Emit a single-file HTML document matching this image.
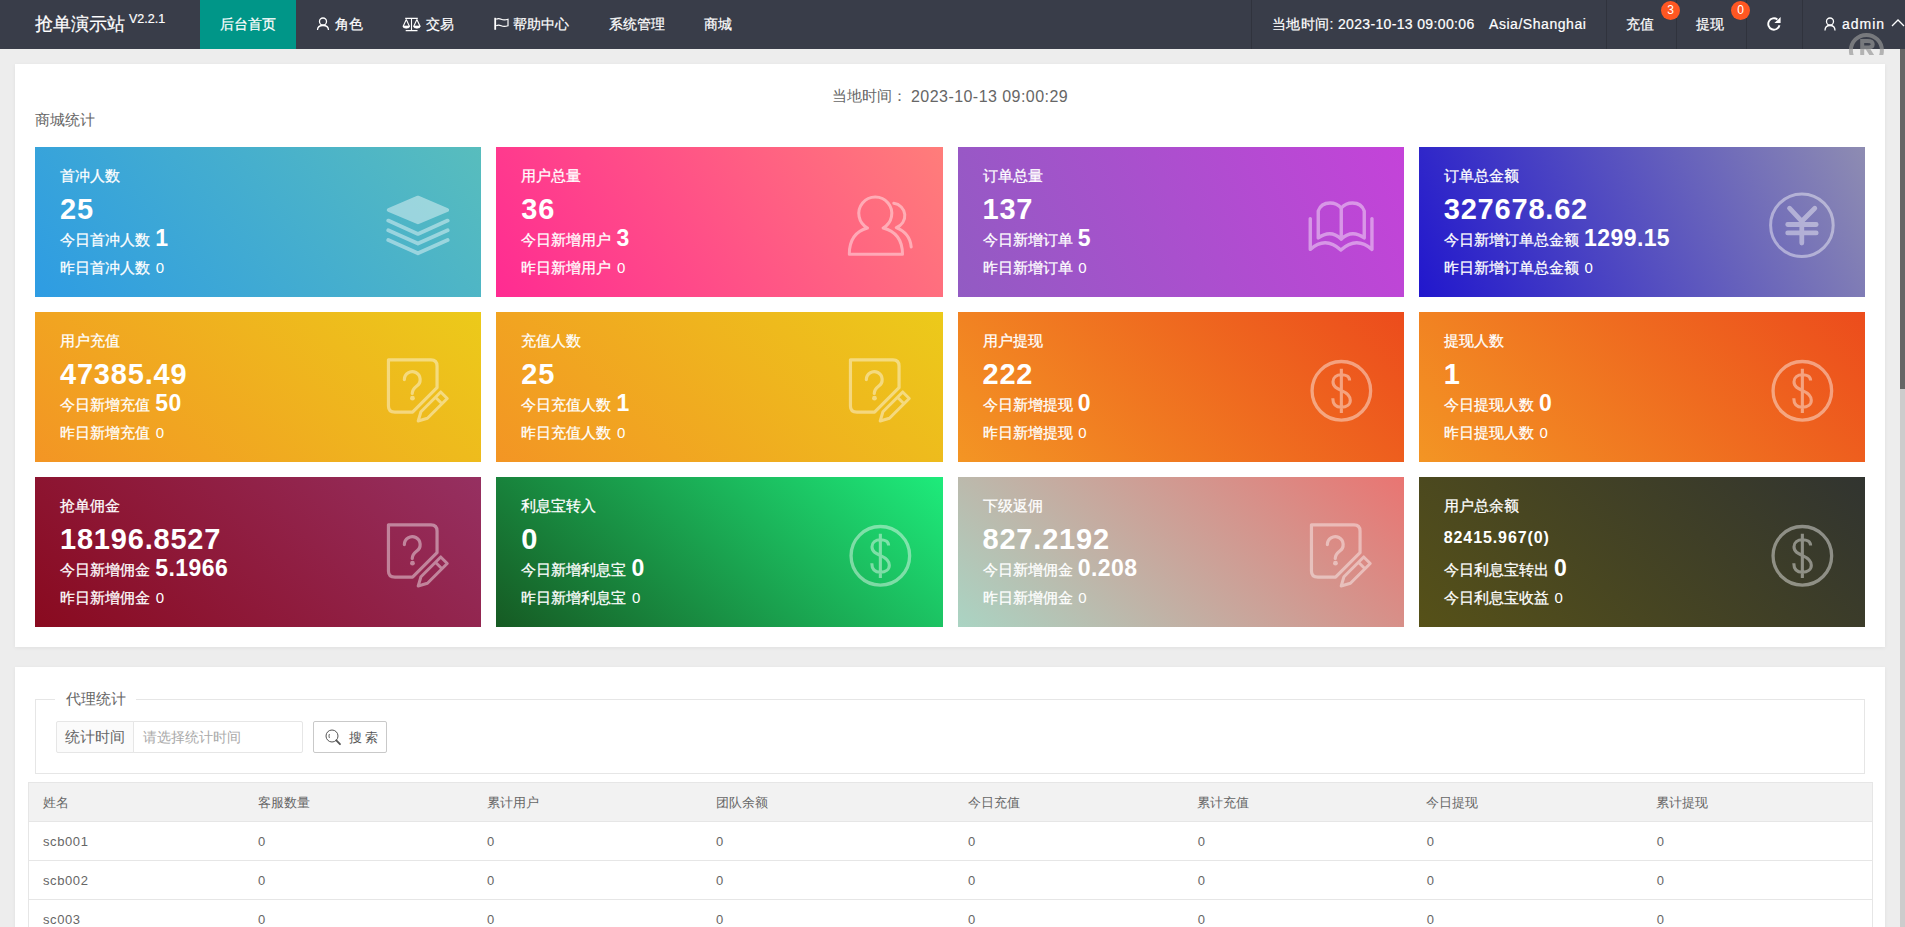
<!DOCTYPE html>
<html><head><meta charset="utf-8">
<style>
*{margin:0;padding:0;box-sizing:border-box}
html,body{width:1905px;height:927px;overflow:hidden;background:#ededed;font-family:"Liberation Sans",sans-serif;}
.hdr{position:absolute;left:0;top:0;width:1905px;height:49px;background:#393d49;color:#fff;font-size:14px;-webkit-text-stroke:0.2px #fff}
.hdr .a{position:absolute;white-space:nowrap;line-height:20px;top:14px}
.logo{position:absolute;left:35px;top:12px;font-size:18px;line-height:24px;color:#fff;white-space:nowrap}
.logo sup{font-size:12.5px;position:relative;top:-5px;vertical-align:top;margin-left:4px}
.active{position:absolute;left:200px;top:0;width:96px;height:49px;background:#009688}
.sep{position:absolute;top:0;width:1px;height:49px;background:#30333d}
.badge{-webkit-text-stroke:0;position:absolute;top:0.5px;width:19px;height:19px;border-radius:10px;background:#ff5722;color:#fff;font-size:12px;line-height:19px;text-align:center;z-index:2}
.panel{position:absolute;left:15px;width:1870px;background:#fff;box-shadow:0 1px 4px rgba(0,0,0,.06)}
.card{position:absolute;width:446.25px;height:150px;color:#fff;overflow:hidden;-webkit-text-stroke:0.25px #fff}
.card .t1{position:absolute;left:25px;top:19px;font-size:15px;line-height:20px;white-space:nowrap}
.card .num{position:absolute;left:25px;top:44.5px;font-size:29px;line-height:34px;font-weight:bold;white-space:nowrap;letter-spacing:0.8px;-webkit-text-stroke:0}
.card .num.small{font-size:16px;top:51px;line-height:20px;letter-spacing:0.9px}
.card .t3{position:absolute;left:25px;top:78px;font-size:15px;line-height:24px;white-space:nowrap}
.card .t3 b{position:relative;top:1px;font-size:23px;font-weight:bold;margin-left:1.2px;-webkit-text-stroke:0;letter-spacing:0.4px}
.card .t4{position:absolute;left:25px;top:111px;font-size:15px;line-height:20px;white-space:nowrap}
.card .v4{margin-left:1.5px;-webkit-text-stroke:0}
.card .ic{position:absolute;left:346.25px;top:30px;overflow:visible}
.tc{position:absolute;line-height:20px;white-space:nowrap;font-size:13px;color:#666}
.th{margin-top:0.5px;margin-left:0.5px}
.td{letter-spacing:0.6px}
</style></head><body>
<div class="hdr">
 <div class="logo">抢单演示站<sup>V2.2.1</sup></div>
 <div class="active"></div>
 <div class="a" style="left:220px">后台首页</div>
 <svg style="position:absolute;left:316px;top:17px" width="14" height="14" viewBox="0 0 14 14" fill="none" stroke="#fff" stroke-width="1.3"><circle cx="7" cy="4.5" r="3.5"/><path d="M1.5,13 Q1.5,8.5 7,8.5 Q12.5,8.5 12.5,13"/></svg>
 <div class="a" style="left:335px">角色</div>
 <svg style="position:absolute;left:402px;top:16px" width="19" height="16" viewBox="0 0 19 16" fill="none" stroke="#fff" stroke-width="1.1"><path d="M3.2,2.4 H15.8 M9.5,1.8 V14.6 M3.7,14.6 H15.5 M4.3,3.4 L1.2,10.2 M4.3,3.4 L7.4,10.2 M14.9,3.4 L11.8,10.2 M14.9,3.4 L18,10.2"/><path d="M0.9,10 A3.4,2.2 0 0 0 7.7,10 Z M11.5,10 A3.4,2.2 0 0 0 18.3,10 Z" fill="#fff" stroke-width="0.7"/></svg>
 <div class="a" style="left:425.5px">交易</div>
 <svg style="position:absolute;left:493px;top:17px" width="17" height="14" viewBox="0 0 17 14" fill="none" stroke="#fff" stroke-width="1.2"><path d="M2.2,0.8 V12.8" stroke-width="1.8"/><path d="M3.2,2.3 Q5.5,1 8.2,2.3 Q11,3.6 15,2.3 V8.8 Q11,10.1 8.2,8.8 Q5.5,7.5 3.2,8.8"/></svg>
 <div class="a" style="left:513px">帮助中心</div>
 <div class="a" style="left:609px">系统管理</div>
 <div class="a" style="left:703.5px">商城</div>
 <div class="sep" style="left:1251px"></div>
 <div class="a" style="left:1272px;letter-spacing:0.35px">当地时间: 2023-10-13 09:00:06</div>
 <div class="a" style="left:1489px;letter-spacing:0.55px">Asia/Shanghai</div>
 <div class="sep" style="left:1606px"></div>
 <div class="a" style="left:1626px">充值</div>
 <div class="badge" style="left:1661px">3</div>
 <div class="sep" style="left:1676px"></div>
 <div class="a" style="left:1696px">提现</div>
 <div class="badge" style="left:1731px">0</div>
 <div class="sep" style="left:1746px"></div>
 <svg style="position:absolute;left:1755px;top:10px" width="40" height="30" viewBox="0 0 40 30" fill="none" stroke="#fff" stroke-width="1.9"><path d="M24.5,15.3 A5.7,5.7 0 1 1 22.4,9.4"/><path d="M19.4,12.9 L25.6,7.1 L25.6,12.9 Z" fill="#fff" stroke="none"/></svg>
 <div class="sep" style="left:1802px"></div>
 <svg style="position:absolute;left:1824px;top:17px" width="12" height="14" viewBox="0 0 12 14" fill="none" stroke="#fff" stroke-width="1.3"><circle cx="6" cy="4.5" r="3.5"/><path d="M1,13.5 Q1,8.5 6,8.5 Q11,8.5 11,13.5"/></svg>
 <div class="a" style="left:1842px;letter-spacing:1px">admin</div>
 <svg style="position:absolute;left:1891px;top:18px" width="14" height="10" viewBox="0 0 14 10" fill="none" stroke="#fff" stroke-width="1.3"><path d="M1,8 L7,2 L13,8"/></svg>
</div>
<div class="panel" style="top:64px;height:583px"></div>
<div style="position:absolute;left:832px;top:86px;font-size:15px;line-height:20px;color:#666;white-space:nowrap">当地时间：</div>
<div style="position:absolute;left:911px;top:87px;font-size:16px;line-height:20px;color:#666;white-space:nowrap;letter-spacing:0.45px">2023-10-13 09:00:29</div>
<div style="position:absolute;left:35px;top:110px;font-size:15px;line-height:20px;color:#666">商城统计</div>
<div class="card" style="left:35px;top:147px;background:linear-gradient(50deg,#2e9ce3,#58bdbd)">
<div class="t1">首冲人数</div>
<div class="num">25</div>
<div class="t3">今日首冲人数 <b>1</b></div>
<div class="t4">昨日首冲人数 <span class="v4">0</span></div>
<svg class="ic" width="100" height="100" viewBox="0 0 100 100"><g opacity="0.43"><path d="M7.75,33 L36.95,20.7 L66.15,33 L36.95,45.2 Z" fill="#fff" stroke="#fff" stroke-width="4" stroke-linejoin="round"/>
<g fill="none" stroke="#fff" stroke-linecap="round" stroke-linejoin="round" stroke-width="3.8"><path d="M7.25,43.6 L36.95,56.9 L66.65,43.6"/><path d="M7.25,53.3 L36.95,66.6 L66.65,53.3"/><path d="M7.25,63 L36.95,76.3 L66.65,63"/></g></g></svg>
</div><div class="card" style="left:496.25px;top:147px;background:linear-gradient(57deg,#ff2b92,#ff7d7a)">
<div class="t1">用户总量</div>
<div class="num">36</div>
<div class="t3">今日新增用户 <b>3</b></div>
<div class="t4">昨日新增用户 <span class="v4">0</span></div>
<svg class="ic" width="100" height="100" viewBox="0 0 100 100"><g opacity="0.43"><g fill="none" stroke="#fff" stroke-linecap="round" stroke-linejoin="round" stroke-width="3"><path d="M24.5,51 A16.5,16.5 0 1 1 40.1,51 Q59.5,56 59.5,77.3 L6.3,77.3 Q6.3,56 24.5,51"/>
<path d="M50.8,26.3 A12.5,12.5 0 0 1 53.2,50.6 Q67,56 68.2,70"/></g></g></svg>
</div><div class="card" style="left:957.5px;top:147px;background:linear-gradient(67deg,#925bc3,#c443d9)">
<div class="t1">订单总量</div>
<div class="num">137</div>
<div class="t3">今日新增订单 <b>5</b></div>
<div class="t4">昨日新增订单 <span class="v4">0</span></div>
<svg class="ic" width="100" height="100" viewBox="0 0 100 100"><g opacity="0.43"><g fill="none" stroke="#fff" stroke-linecap="round" stroke-linejoin="round" stroke-width="3.4"><path d="M6.25,41.6 V72.4 Q21.5,58.7 36.85,73 Q52.5,58.7 67.95,72.4 V41.6"/>
<path d="M14.25,61 V34 Q17,26 26,26 Q33,26 37.25,31 Q41.5,26 48.5,26 Q57.5,26 60.25,34 V61 Q48,52 37.25,62 Q26.5,52 14.25,61 Z"/><path d="M37.25,31 V62"/></g></g></svg>
</div><div class="card" style="left:1418.75px;top:147px;background:linear-gradient(65deg,#2117cd,#8e8cb2)">
<div class="t1">订单总金额</div>
<div class="num">327678.62</div>
<div class="t3">今日新增订单总金额 <b>1299.15</b></div>
<div class="t4">昨日新增订单总金额 <span class="v4">0</span></div>
<svg class="ic" width="100" height="100" viewBox="0 0 100 100"><g opacity="0.43"><g fill="none" stroke="#fff" stroke-linecap="round" stroke-linejoin="round"><circle cx="36.9" cy="48.3" r="31.3" stroke-width="3"/>
<path d="M24.5,31.2 L36.8,44.3 L49.8,31.2 M22.7,47.5 H51.2 M22.7,55.9 H51.2 M36.8,44.3 V66" stroke-width="4.8"/></g></g></svg>
</div><div class="card" style="left:35px;top:312px;background:linear-gradient(42deg,#f39524,#ecca1a)">
<div class="t1">用户充值</div>
<div class="num">47385.49</div>
<div class="t3">今日新增充值 <b>50</b></div>
<div class="t4">昨日新增充值 <span class="v4">0</span></div>
<svg class="ic" width="100" height="100" viewBox="0 0 100 100"><g opacity="0.43"><g fill="none" stroke="#fff" stroke-linecap="round" stroke-linejoin="round" stroke-width="3.2"><path d="M7.45,17.8 H50 Q56.05,17.8 56.05,24 V45.7 L31.55,70.2 H14 Q7.45,70.2 7.45,64 Z"/>
<path d="M23.35,37.6 A7.9,7.9 0 1 1 35.8,44 Q31.25,47.5 31.25,51.5"/></g>
<circle cx="31.45" cy="56.2" r="2.4" fill="#fff"/>
<g transform="translate(63,53.2) rotate(135)" fill="none" stroke="#fff" stroke-linecap="round" stroke-linejoin="round" stroke-width="3" stroke-linejoin="miter"><path d="M0,-4.6 H28 L36.5,0 L28,4.6 H0 Z M7.5,-4.6 V4.6"/></g></g></svg>
</div><div class="card" style="left:496.25px;top:312px;background:linear-gradient(42deg,#f39524,#ecca1a)">
<div class="t1">充值人数</div>
<div class="num">25</div>
<div class="t3">今日充值人数 <b>1</b></div>
<div class="t4">昨日充值人数 <span class="v4">0</span></div>
<svg class="ic" width="100" height="100" viewBox="0 0 100 100"><g opacity="0.43"><g fill="none" stroke="#fff" stroke-linecap="round" stroke-linejoin="round" stroke-width="3.2"><path d="M7.45,17.8 H50 Q56.05,17.8 56.05,24 V45.7 L31.55,70.2 H14 Q7.45,70.2 7.45,64 Z"/>
<path d="M23.35,37.6 A7.9,7.9 0 1 1 35.8,44 Q31.25,47.5 31.25,51.5"/></g>
<circle cx="31.45" cy="56.2" r="2.4" fill="#fff"/>
<g transform="translate(63,53.2) rotate(135)" fill="none" stroke="#fff" stroke-linecap="round" stroke-linejoin="round" stroke-width="3" stroke-linejoin="miter"><path d="M0,-4.6 H28 L36.5,0 L28,4.6 H0 Z M7.5,-4.6 V4.6"/></g></g></svg>
</div><div class="card" style="left:957.5px;top:312px;background:linear-gradient(45deg,#f39524,#ec4c1c)">
<div class="t1">用户提现</div>
<div class="num">222</div>
<div class="t3">今日新增提现 <b>0</b></div>
<div class="t4">昨日新增提现 <span class="v4">0</span></div>
<svg class="ic" width="100" height="100" viewBox="0 0 100 100"><g opacity="0.43"><g fill="none" stroke="#fff" stroke-linecap="round" stroke-linejoin="round"><circle cx="37.35" cy="48.8" r="29.3" stroke-width="3.3"/>
<path d="M45.6,38.5 C45.6,34.5 41.8,32.7 37.5,32.7 C32.5,32.7 29,35.5 29,39.8 C29,44.8 33.2,46.6 37.6,48.6 C42.6,50.8 46.3,53.2 46.3,58.2 C46.3,62.6 42.5,65.2 37.5,65.2 C32.2,65.2 28.8,62.2 28.8,56.2 M37.35,26.8 V71" stroke-width="3.1" stroke-linecap="butt"/></g></g></svg>
</div><div class="card" style="left:1418.75px;top:312px;background:linear-gradient(45deg,#f39524,#ec4c1c)">
<div class="t1">提现人数</div>
<div class="num">1</div>
<div class="t3">今日提现人数 <b>0</b></div>
<div class="t4">昨日提现人数 <span class="v4">0</span></div>
<svg class="ic" width="100" height="100" viewBox="0 0 100 100"><g opacity="0.43"><g fill="none" stroke="#fff" stroke-linecap="round" stroke-linejoin="round"><circle cx="37.35" cy="48.8" r="29.3" stroke-width="3.3"/>
<path d="M45.6,38.5 C45.6,34.5 41.8,32.7 37.5,32.7 C32.5,32.7 29,35.5 29,39.8 C29,44.8 33.2,46.6 37.6,48.6 C42.6,50.8 46.3,53.2 46.3,58.2 C46.3,62.6 42.5,65.2 37.5,65.2 C32.2,65.2 28.8,62.2 28.8,56.2 M37.35,26.8 V71" stroke-width="3.1" stroke-linecap="butt"/></g></g></svg>
</div><div class="card" style="left:35px;top:477px;background:linear-gradient(43deg,#890a1f,#963061)">
<div class="t1">抢单佣金</div>
<div class="num">18196.8527</div>
<div class="t3">今日新增佣金 <b>5.1966</b></div>
<div class="t4">昨日新增佣金 <span class="v4">0</span></div>
<svg class="ic" width="100" height="100" viewBox="0 0 100 100"><g opacity="0.43"><g fill="none" stroke="#fff" stroke-linecap="round" stroke-linejoin="round" stroke-width="3.2"><path d="M7.45,17.8 H50 Q56.05,17.8 56.05,24 V45.7 L31.55,70.2 H14 Q7.45,70.2 7.45,64 Z"/>
<path d="M23.35,37.6 A7.9,7.9 0 1 1 35.8,44 Q31.25,47.5 31.25,51.5"/></g>
<circle cx="31.45" cy="56.2" r="2.4" fill="#fff"/>
<g transform="translate(63,53.2) rotate(135)" fill="none" stroke="#fff" stroke-linecap="round" stroke-linejoin="round" stroke-width="3" stroke-linejoin="miter"><path d="M0,-4.6 H28 L36.5,0 L28,4.6 H0 Z M7.5,-4.6 V4.6"/></g></g></svg>
</div><div class="card" style="left:496.25px;top:477px;background:linear-gradient(41deg,#165a23,#1eeb7b)">
<div class="t1">利息宝转入</div>
<div class="num">0</div>
<div class="t3">今日新增利息宝 <b>0</b></div>
<div class="t4">昨日新增利息宝 <span class="v4">0</span></div>
<svg class="ic" width="100" height="100" viewBox="0 0 100 100"><g opacity="0.43"><g fill="none" stroke="#fff" stroke-linecap="round" stroke-linejoin="round"><circle cx="37.35" cy="48.8" r="29.3" stroke-width="3.3"/>
<path d="M45.6,38.5 C45.6,34.5 41.8,32.7 37.5,32.7 C32.5,32.7 29,35.5 29,39.8 C29,44.8 33.2,46.6 37.6,48.6 C42.6,50.8 46.3,53.2 46.3,58.2 C46.3,62.6 42.5,65.2 37.5,65.2 C32.2,65.2 28.8,62.2 28.8,56.2 M37.35,26.8 V71" stroke-width="3.1" stroke-linecap="butt"/></g></g></svg>
</div><div class="card" style="left:957.5px;top:477px;background:linear-gradient(41deg,#aad4c3,#e97572)">
<div class="t1">下级返佣</div>
<div class="num">827.2192</div>
<div class="t3">今日新增佣金 <b>0.208</b></div>
<div class="t4">昨日新增佣金 <span class="v4">0</span></div>
<svg class="ic" width="100" height="100" viewBox="0 0 100 100"><g opacity="0.43"><g fill="none" stroke="#fff" stroke-linecap="round" stroke-linejoin="round" stroke-width="3.2"><path d="M7.45,17.8 H50 Q56.05,17.8 56.05,24 V45.7 L31.55,70.2 H14 Q7.45,70.2 7.45,64 Z"/>
<path d="M23.35,37.6 A7.9,7.9 0 1 1 35.8,44 Q31.25,47.5 31.25,51.5"/></g>
<circle cx="31.45" cy="56.2" r="2.4" fill="#fff"/>
<g transform="translate(63,53.2) rotate(135)" fill="none" stroke="#fff" stroke-linecap="round" stroke-linejoin="round" stroke-width="3" stroke-linejoin="miter"><path d="M0,-4.6 H28 L36.5,0 L28,4.6 H0 Z M7.5,-4.6 V4.6"/></g></g></svg>
</div><div class="card" style="left:1418.75px;top:477px;background:linear-gradient(42deg,#565118,#313430)">
<div class="t1">用户总余额</div>
<div class="num small">82415.967(0)</div>
<div class="t3">今日利息宝转出 <b>0</b></div>
<div class="t4">今日利息宝收益 <span class="v4">0</span></div>
<svg class="ic" width="100" height="100" viewBox="0 0 100 100"><g opacity="0.43"><g fill="none" stroke="#fff" stroke-linecap="round" stroke-linejoin="round"><circle cx="37.35" cy="48.8" r="29.3" stroke-width="3.3"/>
<path d="M45.6,38.5 C45.6,34.5 41.8,32.7 37.5,32.7 C32.5,32.7 29,35.5 29,39.8 C29,44.8 33.2,46.6 37.6,48.6 C42.6,50.8 46.3,53.2 46.3,58.2 C46.3,62.6 42.5,65.2 37.5,65.2 C32.2,65.2 28.8,62.2 28.8,56.2 M37.35,26.8 V71" stroke-width="3.1" stroke-linecap="butt"/></g></g></svg>
</div>
<div class="panel" style="top:667px;height:300px"></div>
<div style="position:absolute;left:35px;top:699px;width:1830px;height:75px;border:1px solid #e6e6e6"></div>
<div style="position:absolute;left:55px;top:689px;padding:0 10px 0 11px;background:#fff;font-size:15px;line-height:20px;color:#666">代理统计</div>
<div style="position:absolute;left:56px;top:721px;width:78px;height:32px;border:1px solid #e6e6e6;background:#fbfbfb;border-radius:2px 0 0 2px;font-size:15px;line-height:30px;color:#666;padding-left:8px;white-space:nowrap">统计时间</div>
<div style="position:absolute;left:133px;top:721px;width:170px;height:32px;border:1px solid #e6e6e6;border-radius:0 2px 2px 0;font-size:14px;line-height:30px;color:#aaa;padding-left:9px">请选择统计时间</div>
<div style="position:absolute;left:313px;top:721px;width:74px;height:32px;border:1px solid #c9c9c9;border-radius:2px;font-size:13px;line-height:30px;color:#555;white-space:nowrap">
<svg style="position:absolute;left:11.3px;top:7.4px" width="17" height="17" viewBox="0 0 17 17" fill="none" stroke="#555" stroke-width="1"><circle cx="7" cy="7" r="6"/><path d="M4.4,5 Q3.5,7 4.4,9" stroke-width="0.9"/><path d="M11.3,11.3 L15,15.2" stroke-width="1.8" stroke-linecap="round"/></svg>
<span style="position:absolute;left:35px;top:1px;font-size:12.5px;letter-spacing:3.3px">搜索</span></div>
<div style="position:absolute;left:28px;top:782px;width:1845px;height:200px;border:1px solid #e6e6e6;background:#fff"></div><div style="position:absolute;left:29px;top:783px;width:1843px;height:38px;background:#f2f2f2"></div><div style="position:absolute;left:29px;top:821px;width:1843px;height:1px;background:#e6e6e6"></div><div style="position:absolute;left:29px;top:860px;width:1843px;height:1px;background:#e6e6e6"></div><div style="position:absolute;left:29px;top:899px;width:1843px;height:1px;background:#e6e6e6"></div><div class="tc th" style="left:42px;top:792px">姓名</div><div class="tc th" style="left:257px;top:792px">客服数量</div><div class="tc th" style="left:486px;top:792px">累计用户</div><div class="tc th" style="left:715px;top:792px">团队余额</div><div class="tc th" style="left:967px;top:792px">今日充值</div><div class="tc th" style="left:1196.7px;top:792px">累计充值</div><div class="tc th" style="left:1425.7px;top:792px">今日提现</div><div class="tc th" style="left:1655.7px;top:792px">累计提现</div><div class="tc td" style="left:43px;top:832px">scb001</div><div class="tc td" style="left:258px;top:832px">0</div><div class="tc td" style="left:487px;top:832px">0</div><div class="tc td" style="left:716px;top:832px">0</div><div class="tc td" style="left:968px;top:832px">0</div><div class="tc td" style="left:1197.7px;top:832px">0</div><div class="tc td" style="left:1426.7px;top:832px">0</div><div class="tc td" style="left:1656.7px;top:832px">0</div><div class="tc td" style="left:43px;top:871px">scb002</div><div class="tc td" style="left:258px;top:871px">0</div><div class="tc td" style="left:487px;top:871px">0</div><div class="tc td" style="left:716px;top:871px">0</div><div class="tc td" style="left:968px;top:871px">0</div><div class="tc td" style="left:1197.7px;top:871px">0</div><div class="tc td" style="left:1426.7px;top:871px">0</div><div class="tc td" style="left:1656.7px;top:871px">0</div><div class="tc td" style="left:43px;top:910px">sc003</div><div class="tc td" style="left:258px;top:910px">0</div><div class="tc td" style="left:487px;top:910px">0</div><div class="tc td" style="left:716px;top:910px">0</div><div class="tc td" style="left:968px;top:910px">0</div><div class="tc td" style="left:1197.7px;top:910px">0</div><div class="tc td" style="left:1426.7px;top:910px">0</div><div class="tc td" style="left:1656.7px;top:910px">0</div>
<div style="position:absolute;left:1900px;top:49px;width:5px;height:878px;background:#cccccc"></div>
<div style="position:absolute;left:1900px;top:49px;width:5px;height:340px;background:#666666"></div>
<svg style="position:absolute;left:1846px;top:30px" width="41" height="25" viewBox="0 0 41 25"><g fill="none" stroke="rgba(150,150,150,0.67)" stroke-width="4"><circle cx="20.4" cy="20.4" r="15.5"/><path d="M16.2,30 V11 H21.5 Q26.7,11 26.7,14.3 Q26.7,17.6 21.5,17.6 H16.2 M21,17.6 L27,27" stroke-linejoin="miter"/></g></svg>
</body></html>
